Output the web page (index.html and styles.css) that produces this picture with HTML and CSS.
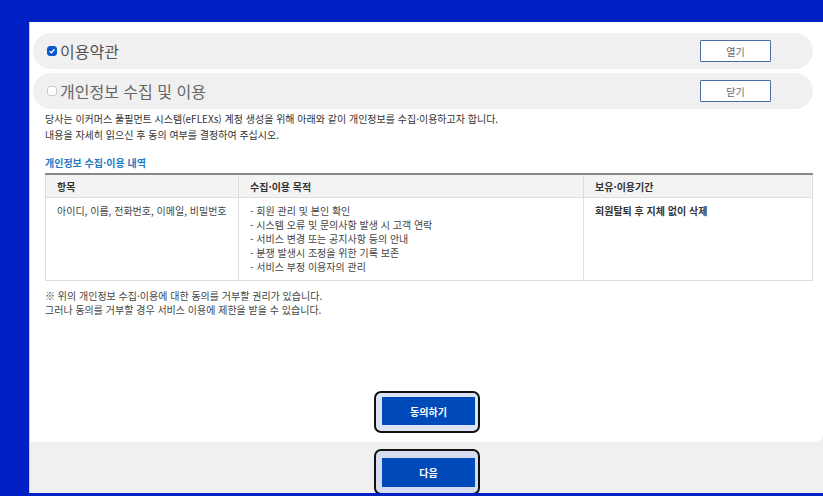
FILE: index.html
```html
<!DOCTYPE html>
<html lang="ko">
<head>
    <meta charset="UTF-8">
    <meta name="viewport" content="width=device-width, initial-scale=1.0">
    <title>회원가입 - 약관 동의</title>
    <link rel="stylesheet" href="styles.css">
</head>
<body>

    <div class="page">
        <div class="frame">
            <div class="panel">
                <div class="terms-row">
                    <label class="terms-label">
                        <span class="check checked">
                            <svg viewBox="0 0 10 10" width="8" height="8"><path d="M2 5.2 L4.2 7.2 L8 2.8" fill="none" stroke="#fff" stroke-width="1.6"/></svg>
                        </span>
                        이용약관
                    </label>
                    <button class="toggle-btn">열기</button>
                </div>
                <div class="terms-row">
                    <label class="terms-label muted">
                        <span class="check"></span>
                        개인정보 수집 및 이용
                    </label>
                    <button class="toggle-btn">닫기</button>
                </div>

                <div class="terms-body">
                    <p class="intro">당사는 이커머스 풀필먼트 시스템(eFLEXs) 계정 생성을 위해 아래와 같이 개인정보를 수집·이용하고자 합니다.<br>내용을 자세히 읽으신 후 동의 여부를 결정하여 주십시오.</p>

                    <h4 class="section-title">개인정보 수집·이용 내역</h4>
                    <table class="info-table">
                        <thead>
                            <tr>
                                <th class="col-item">항목</th>
                                <th class="col-purpose">수집·이용 목적</th>
                                <th>보유·이용기간</th>
                            </tr>
                        </thead>
                        <tbody>
                            <tr>
                                <td>아이디, 이름, 전화번호, 이메일, 비밀번호</td>
                                <td>
                                    - 회원 관리 및 본인 확인<br>
                                    - 시스템 오류 및 문의사항 발생 시 고객 연락<br>
                                    - 서비스 변경 또는 공지사항 등의 안내<br>
                                    - 분쟁 발생시 조정을 위한 기록 보존<br>
                                    - 서비스 부정 이용자의 관리
                                </td>
                                <td class="strong">회원탈퇴 후 지체 없이 삭제</td>
                            </tr>
                        </tbody>
                    </table>

                    <p class="notice">※ 위의 개인정보 수집·이용에 대한 동의를 거부할 권리가 있습니다.<br>그러나 동의를 거부할 경우 서비스 이용에 제한을 받을 수 있습니다.</p>
                </div>

                <div class="btn-ring">
                    <button class="primary-btn">동의하기</button>
                </div>
            </div>

            <div class="footer">
                <div class="btn-ring">
                    <button class="primary-btn">다음</button>
                </div>
            </div>
        </div>
    </div>

</body>
</html>
```

FILE: styles.css
```css
body {
    margin: 0;
    background-color: #0020c4;
    font-family: 'Noto Sans CJK KR', 'Noto Sans', sans-serif;
    color: #333;
    overflow: hidden;
}

.page {
    padding: 22px 0 0 29px;
    height: 493px;
    box-sizing: border-box;
}

.frame {
    height: 100%;
    background-color: #f0f0f0;
    border-left: 1px solid #c9cfe6;
    display: flex;
    flex-direction: column;
}

.panel {
    height: 420px;
    box-sizing: border-box;
    background-color: #fff;
    border-bottom-right-radius: 8px;
    padding: 11px 10px 9px 3px;
    display: flex;
    flex-direction: column;
}

.terms-row {
    display: flex;
    align-items: center;
    justify-content: space-between;
    height: 36px;
    margin-bottom: 4px;
    padding: 0 42px 0 14px;
    background-color: #f0f0f0;
    border-radius: 18px;
}

.terms-label {
    display: flex;
    align-items: center;
    gap: 3px;
    font-size: 16px;
    color: #555;
}

.terms-label.muted {
    color: #666;
}

.check {
    width: 10px;
    height: 10px;
    box-sizing: border-box;
    border: 1px solid #ccc;
    border-radius: 3px;
    background-color: #fff;
    display: flex;
    align-items: center;
    justify-content: center;
}

.check.checked {
    background-color: #0b57c9;
    border-color: #0b57c9;
}

.toggle-btn {
    width: 71px;
    height: 22px;
    background-color: #fff;
    border: 1px solid #4a6fa8;
    border-radius: 1px;
    font-family: inherit;
    font-size: 10px;
    color: #666;
    padding: 0;
}

.terms-body {
    padding-left: 12px;
}

.intro {
    margin: -2px 0 0;
    font-size: 10px;
    line-height: 16px;
    color: #333;
}

.section-title {
    margin: 12px 0 2px;
    font-size: 10px;
    font-weight: bold;
    color: #1e7bc4;
    line-height: 16px;
}

.info-table {
    width: 100%;
    border-collapse: collapse;
    border-top: 2px solid #888;
    font-size: 10px;
}

.info-table th {
    height: 22px;
    text-align: left;
    padding: 0 11px;
    background-color: #f3f3f3;
    border: 1px solid #ddd;
    border-top: none;
    font-weight: bold;
    color: #333;
}

.info-table .col-item {
    width: 170px;
}

.info-table .col-purpose {
    width: 322px;
}

.info-table td {
    vertical-align: top;
    padding: 6px 11px 6px;
    border: 1px solid #ddd;
    line-height: 14px;
    color: #444;
}

.info-table td.strong {
    font-weight: bold;
    color: #333;
}

.notice {
    margin: 8px 0 0;
    font-size: 10px;
    line-height: 14px;
    color: #444;
}

.btn-ring {
    align-self: center;
    margin: auto 0 0 8px;
    padding: 4px 3px 6px 6px;
    background-color: #dde3f5;
    border: 2px solid #111;
    border-radius: 7px;
    display: flex;
}

.primary-btn {
    width: 93px;
    height: 28px;
    border: none;
    background-color: #0049b8;
    color: #fff;
    font-family: inherit;
    font-size: 10px;
    font-weight: bold;
    padding: 0;
}

.footer {
    flex: 1;
    display: flex;
    justify-content: center;
    align-items: flex-start;
    padding: 9px 10px 0 3px;
    overflow: hidden;
}

.footer .btn-ring {
    margin-top: 0;
    padding-top: 7px;
    background-color: #d6dcef;
}

.footer .primary-btn {
    height: 29px;
}
```
